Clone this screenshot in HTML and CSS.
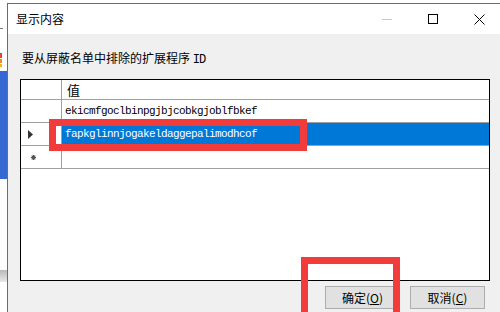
FILE: index.html
```html
<!DOCTYPE html>
<html lang="zh-CN">
<head>
    <meta charset="UTF-8">
    <meta name="viewport" content="width=device-width, initial-scale=1.0">
    <title>显示内容</title>
    <link rel="stylesheet" href="styles.css">
</head>
<body>
    <div class="desk">
        <div class="behind">
            <span class="dash"></span>
            <span class="chip chip-red"></span>
            <span class="chip chip-orange"></span>
            <span class="chip chip-yellow"></span>
            <div class="behind-blue"></div>
            <div class="behind-white"></div>
            <div class="behind-shade"></div>
        </div>

        <div class="window">
            <div class="titlebar">
                <span class="title">显示内容</span>
                <div class="controls">
                    <span class="ctl"><i class="min"></i></span>
                    <span class="ctl"><i class="max"></i></span>
                    <span class="ctl">
                        <svg width="11" height="11" viewBox="0 0 11 11">
                            <path d="M0.5 0.5 L10.5 10.5 M10.5 0.5 L0.5 10.5" stroke="#000" stroke-width="1" fill="none"/>
                        </svg>
                    </span>
                </div>
            </div>

            <div class="client">
                <p class="prompt">要从屏蔽名单中排除的扩展程序 <span class="mono id">ID</span></p>

                <div class="grid">
                    <div class="row head">
                        <div class="rh"></div>
                        <div class="cell">值</div>
                    </div>
                    <div class="row">
                        <div class="rh"></div>
                        <div class="cell mono">ekicmfgoclbinpgjbjcobkgjoblfbkef</div>
                    </div>
                    <div class="row selected">
                        <div class="rh">
                            <svg width="5" height="9" viewBox="0 0 5 9"><path d="M0 0 L5 4.5 L0 9 Z" fill="#333"/></svg>
                        </div>
                        <div class="cell mono">fapkglinnjogakeldaggepalimodhcof</div>
                    </div>
                    <div class="row new">
                        <div class="rh">
                            <svg width="5" height="5" viewBox="0 0 5 5">
                                <path d="M2.5 0 V5 M0 2.5 H5 M0.7 0.7 L4.3 4.3 M4.3 0.7 L0.7 4.3" stroke="#555" stroke-width="1.2"/>
                            </svg>
                        </div>
                        <div class="cell"></div>
                    </div>
                    <div class="mark mark-row"></div>
                </div>

                <div class="buttons">
                    <button class="btn">确定(<u>O</u>)</button>
                    <button class="btn">取消(<u>C</u>)</button>
                </div>

                <div class="mark mark-ok"></div>
            </div>
        </div>
    </div>
</body>
</html>
```

FILE: styles.css
```css
body {
    margin: 0;
    padding: 0;
    width: 500px;
    height: 312px;
    overflow: hidden;
    background: #fff;
    font-family: 'Noto Sans CJK SC', 'Noto Sans', sans-serif;
    font-size: 12px;
    color: #000;
}
.desk {
    display: flex;
    align-items: flex-start;
    height: 312px;
}

/* window behind the dialog, only its edge shows */
.behind {
    flex: none;
    width: 7px;
    height: 312px;
    display: flex;
    flex-direction: column;
}
.dash {
    width: 3px;
    height: 1px;
    margin-top: 28px;
    background: #777;
}
.chip { width: 2px; }
.chip-red { height: 5px; margin-top: 24px; background: #e8412f; }
.chip-orange { height: 4px; margin-top: 1px; background: #f2891f; }
.chip-yellow { height: 3px; margin-top: 1px; background: #f5b21d; }
.behind-blue {
    height: 108px;
    margin-top: 4px;
    background: #3568d2;
}
.behind-white {
    height: 91px;
    background: #fdfdfd;
}
.behind-shade {
    height: 12px;
    background: linear-gradient(#b9b9b9, #e9e9e9);
}

/* dialog */
.window {
    flex: none;
    width: 495px;
    height: 309px;
    margin-top: 3px;
    box-sizing: border-box;
    border-top: 1px solid #2b7bd3;
    border-left: 1px solid #2b7bd3;
    display: flex;
    flex-direction: column;
    background: #f0f0f0;
}
.titlebar {
    height: 30px;
    display: flex;
    align-items: center;
    justify-content: space-between;
    background: #fff;
}
.title {
    padding-left: 8px;
    line-height: 16px;
}
.controls {
    display: flex;
    height: 30px;
}
.ctl {
    width: 46px;
    height: 30px;
    display: flex;
    align-items: center;
    justify-content: center;
}
.min {
    width: 10px;
    height: 1px;
    background: #c8c8c8;
}
.max {
    width: 10px;
    height: 10px;
    box-sizing: border-box;
    border: 1px solid #000;
}

.client {
    position: relative;
    flex: 1;
}
.prompt {
    margin: 16px 0 0 14px;
    line-height: 16px;
}
.mono {
    font-family: 'Liberation Mono', 'DejaVu Sans Mono', monospace;
    font-size: 11px;
    letter-spacing: -0.6px;
}
.mono.id {
    font-size: 12px;
    letter-spacing: -1px;
}

.grid {
    position: relative;
    margin: 11px 12px 0 12px;
    height: 202px;
    box-sizing: border-box;
    border: 1px solid #000;
    background: #fff;
    display: flex;
    flex-direction: column;
}
.row {
    display: flex;
    height: 23px;
    box-sizing: border-box;
    border-bottom: 1px solid #a0a0a0;
}
.row.head { height: 20px; }
.rh {
    flex: none;
    width: 41px;
    box-sizing: border-box;
    border-right: 1px solid #a0a0a0;
    display: flex;
    align-items: center;
    padding-left: 7px;
}
.row.new .rh { padding-left: 10px; }
.cell {
    flex: 1;
    display: flex;
    align-items: center;
    padding-left: 3px;
    white-space: nowrap;
}
.row.head .cell {
    padding-left: 5px;
    font-size: 13px;
}
.row.selected .cell {
    background: #0078d7;
    color: #fff;
}

.buttons {
    display: flex;
    justify-content: flex-end;
    gap: 10px;
    margin-top: 5px;
    padding-right: 17px;
}
.btn {
    width: 75px;
    height: 23px;
    padding: 0;
    background: #e1e1e1;
    border: 1px solid #adadad;
    font-family: 'Noto Sans CJK SC', 'Noto Sans', sans-serif;
    font-size: 12px;
    color: #000;
}

/* red annotation boxes drawn over the screenshot */
.mark {
    position: absolute;
    box-sizing: border-box;
    border: 7px solid #f23b3b;
}
.mark-row {
    left: 28px;
    top: 39px;
    width: 258px;
    height: 32px;
}
.mark-ok {
    left: 293px;
    top: 223px;
    width: 99px;
    height: 62px;
}
```
